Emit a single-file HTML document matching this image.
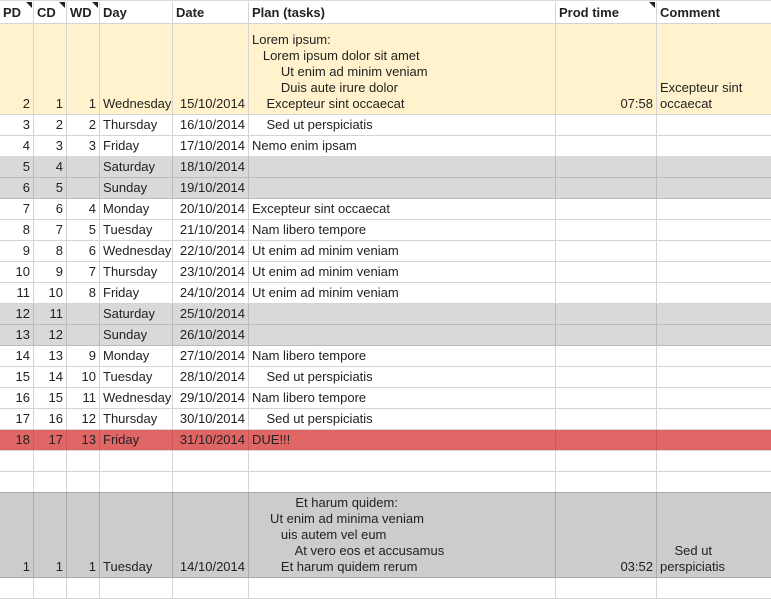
<!DOCTYPE html>
<html><head><meta charset="utf-8"><style>
*{margin:0;padding:0;box-sizing:border-box}
body{width:771px;height:597px;overflow:hidden;background:#fff;font-family:"Liberation Sans",Arial,sans-serif;font-size:13px;color:#222;position:relative;border-top:1px solid #d9d9d9}
.r{position:absolute;left:0;width:771px;display:flex;border-bottom:1px solid #d4d4d4}
.c{border-right:1px solid #d4d4d4;height:100%;display:flex;flex-direction:column;justify-content:flex-end;padding:0 3px 2px 3px;white-space:pre;line-height:16px;overflow:visible;position:relative}
.c:nth-child(1){width:34px;text-align:right}
.c:nth-child(2){width:33px;text-align:right}
.c:nth-child(3){width:33px;text-align:right}
.c:nth-child(4){width:73px}
.c:nth-child(5){width:76px;text-align:right}
.c:nth-child(6){width:307px}
.c:nth-child(7){width:101px;text-align:right}
.c:nth-child(8){width:114px;border-right:none}
.h .c{font-weight:bold;text-align:left;justify-content:center;padding-bottom:0}
.tri:after{content:"";position:absolute;right:1px;top:0;border-top:6px solid #222;border-left:6px solid transparent}
.y{background:#fff2cc}.g{background:#d9d9d9;border-bottom-color:#bbb}.g .c{border-right-color:#bbb}
.red{background:#e06666}.red .c{border-right-color:#c85a5a}
.g2{background:#cccccc;border-bottom-color:#aaa}.g2 .c{border-right-color:#aaa}
</style></head><body>
<div class="r h" style="top:1px;height:22px"><div class="c tri">PD</div><div class="c tri">CD</div><div class="c tri">WD</div><div class="c">Day</div><div class="c">Date</div><div class="c">Plan (tasks)</div><div class="c tri">Prod time</div><div class="c">Comment</div></div>
<div class="r y" style="top:23px;height:91px"><div class="c">2</div><div class="c">1</div><div class="c">1</div><div class="c">Wednesday</div><div class="c">15/10/2014</div><div class="c">Lorem ipsum:
   Lorem ipsum dolor sit amet
        Ut enim ad minim veniam
        Duis aute irure dolor
    Excepteur sint occaecat</div><div class="c">07:58</div><div class="c">Excepteur sint
occaecat</div></div>
<div class="r" style="top:114px;height:21px"><div class="c">3</div><div class="c">2</div><div class="c">2</div><div class="c">Thursday</div><div class="c">16/10/2014</div><div class="c">    Sed ut perspiciatis</div><div class="c"></div><div class="c"></div></div>
<div class="r" style="top:135px;height:21px"><div class="c">4</div><div class="c">3</div><div class="c">3</div><div class="c">Friday</div><div class="c">17/10/2014</div><div class="c">Nemo enim ipsam</div><div class="c"></div><div class="c"></div></div>
<div class="r g" style="top:156px;height:21px"><div class="c">5</div><div class="c">4</div><div class="c"></div><div class="c">Saturday</div><div class="c">18/10/2014</div><div class="c"></div><div class="c"></div><div class="c"></div></div>
<div class="r g" style="top:177px;height:21px"><div class="c">6</div><div class="c">5</div><div class="c"></div><div class="c">Sunday</div><div class="c">19/10/2014</div><div class="c"></div><div class="c"></div><div class="c"></div></div>
<div class="r" style="top:198px;height:21px"><div class="c">7</div><div class="c">6</div><div class="c">4</div><div class="c">Monday</div><div class="c">20/10/2014</div><div class="c">Excepteur sint occaecat</div><div class="c"></div><div class="c"></div></div>
<div class="r" style="top:219px;height:21px"><div class="c">8</div><div class="c">7</div><div class="c">5</div><div class="c">Tuesday</div><div class="c">21/10/2014</div><div class="c">Nam libero tempore</div><div class="c"></div><div class="c"></div></div>
<div class="r" style="top:240px;height:21px"><div class="c">9</div><div class="c">8</div><div class="c">6</div><div class="c">Wednesday</div><div class="c">22/10/2014</div><div class="c">Ut enim ad minim veniam</div><div class="c"></div><div class="c"></div></div>
<div class="r" style="top:261px;height:21px"><div class="c">10</div><div class="c">9</div><div class="c">7</div><div class="c">Thursday</div><div class="c">23/10/2014</div><div class="c">Ut enim ad minim veniam</div><div class="c"></div><div class="c"></div></div>
<div class="r" style="top:282px;height:21px"><div class="c">11</div><div class="c">10</div><div class="c">8</div><div class="c">Friday</div><div class="c">24/10/2014</div><div class="c">Ut enim ad minim veniam</div><div class="c"></div><div class="c"></div></div>
<div class="r g" style="top:303px;height:21px"><div class="c">12</div><div class="c">11</div><div class="c"></div><div class="c">Saturday</div><div class="c">25/10/2014</div><div class="c"></div><div class="c"></div><div class="c"></div></div>
<div class="r g" style="top:324px;height:21px"><div class="c">13</div><div class="c">12</div><div class="c"></div><div class="c">Sunday</div><div class="c">26/10/2014</div><div class="c"></div><div class="c"></div><div class="c"></div></div>
<div class="r" style="top:345px;height:21px"><div class="c">14</div><div class="c">13</div><div class="c">9</div><div class="c">Monday</div><div class="c">27/10/2014</div><div class="c">Nam libero tempore</div><div class="c"></div><div class="c"></div></div>
<div class="r" style="top:366px;height:21px"><div class="c">15</div><div class="c">14</div><div class="c">10</div><div class="c">Tuesday</div><div class="c">28/10/2014</div><div class="c">    Sed ut perspiciatis</div><div class="c"></div><div class="c"></div></div>
<div class="r" style="top:387px;height:21px"><div class="c">16</div><div class="c">15</div><div class="c">11</div><div class="c">Wednesday</div><div class="c">29/10/2014</div><div class="c">Nam libero tempore</div><div class="c"></div><div class="c"></div></div>
<div class="r" style="top:408px;height:21px"><div class="c">17</div><div class="c">16</div><div class="c">12</div><div class="c">Thursday</div><div class="c">30/10/2014</div><div class="c">    Sed ut perspiciatis</div><div class="c"></div><div class="c"></div></div>
<div class="r red" style="top:429px;height:21px"><div class="c">18</div><div class="c">17</div><div class="c">13</div><div class="c">Friday</div><div class="c">31/10/2014</div><div class="c">DUE!!!</div><div class="c"></div><div class="c"></div></div>
<div class="r" style="top:450px;height:21px"><div class="c"></div><div class="c"></div><div class="c"></div><div class="c"></div><div class="c"></div><div class="c"></div><div class="c"></div><div class="c"></div></div>
<div class="r" style="top:471px;height:21px;border-bottom-color:#aaa"><div class="c"></div><div class="c"></div><div class="c"></div><div class="c"></div><div class="c"></div><div class="c"></div><div class="c"></div><div class="c"></div></div>
<div class="r g2" style="top:492px;height:85px"><div class="c">1</div><div class="c">1</div><div class="c">1</div><div class="c">Tuesday</div><div class="c">14/10/2014</div><div class="c">            Et harum quidem:
     Ut enim ad minima veniam
        uis autem vel eum
            At vero eos et accusamus
        Et harum quidem rerum</div><div class="c">03:52</div><div class="c">    Sed ut
perspiciatis</div></div>
<div class="r" style="top:577px;height:21px"><div class="c"></div><div class="c"></div><div class="c"></div><div class="c"></div><div class="c"></div><div class="c"></div><div class="c"></div><div class="c"></div></div>
</body></html>
